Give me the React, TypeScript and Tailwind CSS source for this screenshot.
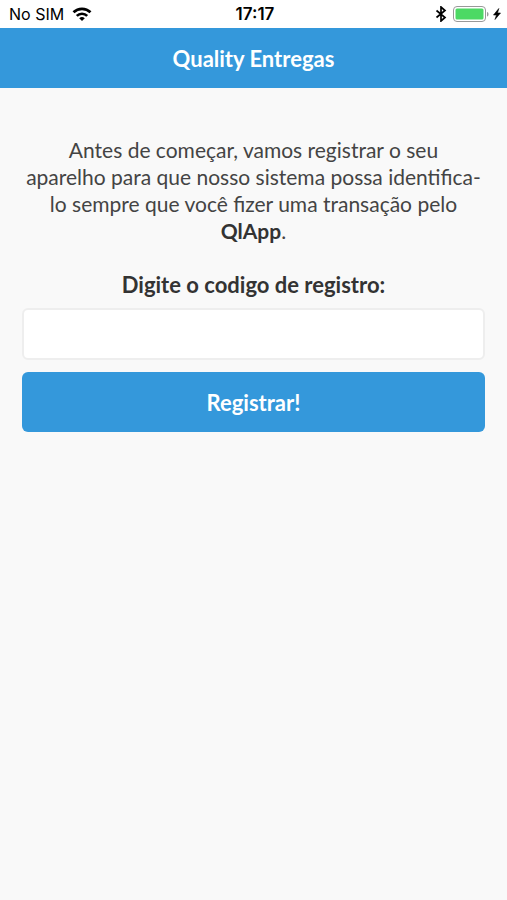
import { useState } from "react";

function StatusBar() {
  return (
    <div className="grid h-7 grid-cols-3 items-center bg-white pr-[6px] pl-[9px] font-['Inter',sans-serif] text-base leading-7 text-black">
      <div className="flex items-center gap-2">
        <span>No SIM</span>
        <svg className="h-4 w-5" viewBox="0 0 20 16" fill="none" stroke="black" strokeWidth="2.7" aria-label="Wi-Fi">
          <path d="M1.500 6.300a12.200 12.200 0 0 1 17 0" />
          <path d="M4.800 9.900a7.400 7.400 0 0 1 10.400 0" />
          <path d="M10 15 7.200 12.200a4.200 4.200 0 0 1 5.600 0z" fill="black" stroke="none" />
        </svg>
      </div>
      <span className="text-center text-[17px] font-semibold">17:17</span>
      <div className="flex items-center justify-end gap-1">
        <svg className="mr-0.5 h-4 w-3" viewBox="0 0 12 16" fill="none" stroke="black" strokeWidth="1.7" aria-label="Bluetooth">
          <path d="m1.500 4.500 8.500 7-4 3.500V1l4 3.500-8.500 7" />
        </svg>
        <svg className="h-4 w-9" viewBox="0 0 36 16" aria-label="Bateria">
          <rect x="0.500" y="0.500" width="32" height="15" rx="3.500" fill="none" stroke="#999" />
          <rect x="2.500" y="2.500" width="28" height="11" rx="1.500" fill="#4cd964" />
          <path d="M34 6c2 .5 2 4 0 4.500z" fill="#999" />
        </svg>
        <svg className="h-3 w-2" viewBox="0 0 8 12" stroke="black" strokeWidth="0.6" strokeLinejoin="round" aria-label="Carregando">
          <path d="M5.800.500.500 7h3L2 11.500 7.500 5h-3z" />
        </svg>
      </div>
    </div>
  );
}

export default function App() {
  const [code, setCode] = useState("");
  return (
    <div className="min-h-screen bg-[#f9f9f9] font-['Lato',sans-serif] text-[22px] leading-[27px] text-[#333]">
      <StatusBar />
      <header className="flex h-15 items-center justify-center bg-[#3498db] text-white">
        <h1 className="font-bold">Quality Entregas</h1>
      </header>
      <main className="px-[22px] pt-12 text-center">
        <p className="text-[21px] text-[#444]">
          Antes de começar, vamos registrar o seu
          <br />
          aparelho para que nosso sistema possa identifica-
          <br />
          lo sempre que você fizer uma transação pelo
          <br />
          <strong className="text-[#333]">QlApp</strong>.
        </p>
        <form className="mt-[27px]" onSubmit={(e) => e.preventDefault()}>
          <label htmlFor="code" className="block font-bold">
            Digite o codigo de registro:
          </label>
          <input
            id="code"
            value={code}
            onChange={(e) => setCode(e.target.value)}
            className="mt-[10px] block h-13 w-full rounded-md border-2 border-[#eee] bg-white px-3"
          />
          <button type="submit" className="mt-3 block h-15 w-full rounded-md bg-[#3498db] font-bold text-white">
            Registrar!
          </button>
        </form>
      </main>
    </div>
  );
}
